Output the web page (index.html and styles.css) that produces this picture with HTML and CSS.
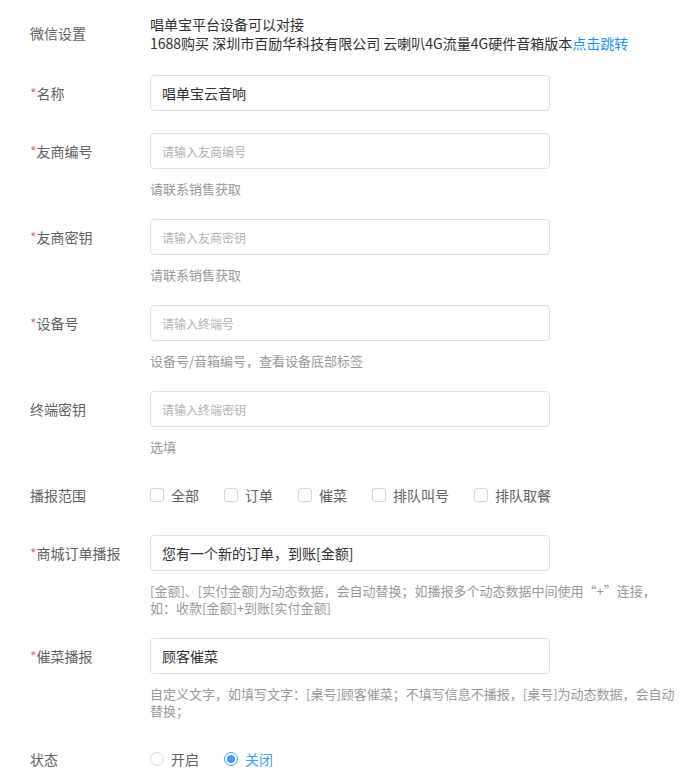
FILE: index.html
```html
<!DOCTYPE html>
<html lang="zh-CN">
<head>
<meta charset="utf-8">
<title>设备设置</title>
<link rel="stylesheet" href="styles.css">
</head>
<body>
<form class="form">
  <div class="item item-top">
    <div class="label">微信设置</div>
    <div class="content">
      <div class="info">唱单宝平台设备可以对接</div>
      <div class="info">1688购买 深圳市百励华科技有限公司 云喇叭4G流量4G硬件音箱版本<a class="link" href="#">点击跳转</a></div>
    </div>
  </div>

  <div class="item">
    <div class="label"><span class="req">*</span>名称</div>
    <div class="content">
      <input class="input" type="text" value="唱单宝云音响">
    </div>
  </div>

  <div class="item">
    <div class="label"><span class="req">*</span>友商编号</div>
    <div class="content">
      <input class="input" type="text" placeholder="请输入友商编号">
      <div class="help">请联系销售获取</div>
    </div>
  </div>

  <div class="item">
    <div class="label"><span class="req">*</span>友商密钥</div>
    <div class="content">
      <input class="input" type="text" placeholder="请输入友商密钥">
      <div class="help">请联系销售获取</div>
    </div>
  </div>

  <div class="item">
    <div class="label"><span class="req">*</span>设备号</div>
    <div class="content">
      <input class="input" type="text" placeholder="请输入终端号">
      <div class="help">设备号/音箱编号，查看设备底部标签</div>
    </div>
  </div>

  <div class="item">
    <div class="label">终端密钥</div>
    <div class="content">
      <input class="input" type="text" placeholder="请输入终端密钥">
      <div class="help">选填</div>
    </div>
  </div>

  <div class="item">
    <div class="label">播报范围</div>
    <div class="content choices">
      <label class="choice"><span class="box"></span><span class="choice-text">全部</span></label>
      <label class="choice"><span class="box"></span><span class="choice-text">订单</span></label>
      <label class="choice"><span class="box"></span><span class="choice-text">催菜</span></label>
      <label class="choice"><span class="box"></span><span class="choice-text">排队叫号</span></label>
      <label class="choice"><span class="box"></span><span class="choice-text">排队取餐</span></label>
    </div>
  </div>

  <div class="item">
    <div class="label"><span class="req">*</span>商城订单播报</div>
    <div class="content">
      <input class="input" type="text" value="您有一个新的订单，到账[金额]">
      <div class="help">[金额]、[实付金额]为动态数据，会自动替换；如播报多个动态数据中间使用“+”连接，如：收款[金额]+到账[实付金额]</div>
    </div>
  </div>

  <div class="item">
    <div class="label"><span class="req">*</span>催菜播报</div>
    <div class="content">
      <input class="input" type="text" value="顾客催菜">
      <div class="help">自定义文字，如填写文字：[桌号]顾客催菜；不填写信息不播报，[桌号]为动态数据，会自动替换；</div>
    </div>
  </div>

  <div class="item">
    <div class="label">状态</div>
    <div class="content choices">
      <label class="choice"><span class="radio"></span><span class="choice-text">开启</span></label>
      <label class="choice checked"><span class="radio"></span><span class="choice-text">关闭</span></label>
    </div>
  </div>
</form>
</body>
</html>
```

FILE: styles.css
```css
* { box-sizing: border-box; }

body {
  margin: 0;
  background: #ffffff;
  font-family: "Noto Sans CJK SC", "Microsoft YaHei", "Noto Sans", sans-serif;
  font-size: 14px;
  color: #606266;
}

.form {
  padding: 15px 0 0 30px;
}

.item {
  display: flex;
  align-items: flex-start;
  margin-bottom: 22px;
}

.label {
  width: 120px;
  flex: none;
  line-height: 36px;
  font-size: 14px;
  color: #606266;
}

.req {
  color: #f56c6c;
}

.content {
  flex: none;
  width: 528px;
}

.info {
  line-height: 19px;
  color: #303133;
  font-size: 14px;
}

.link {
  color: #1890ff;
  text-decoration: none;
}

.input {
  display: block;
  width: 400px;
  height: 36px;
  margin: 0;
  padding: 0 11px;
  border: 1px solid #dcdfe6;
  border-radius: 4px;
  background: #fff;
  font-family: inherit;
  font-size: 14px;
  color: #303133;
  outline: none;
}

.input::placeholder {
  font-size: 12px;
  color: #b0b3b9;
}

.help {
  margin-top: 11px;
  line-height: 17px;
  font-size: 13px;
  color: #999999;
}

.choices {
  display: flex;
  align-items: center;
  height: 36px;
}

.choice {
  display: flex;
  align-items: center;
  margin-right: 25px;
  color: #606266;
  font-size: 14px;
  cursor: pointer;
}

.choice-text {
  margin-left: 7px;
  line-height: 20px;
}

.box {
  width: 14px;
  height: 14px;
  border: 1px solid #d4d7de;
  border-radius: 3px;
  background: #fff;
}

.radio {
  width: 14px;
  height: 14px;
  border: 1px solid #d4d7de;
  border-radius: 50%;
  background: #fff;
  position: relative;
}

.checked .radio {
  border-color: #409eff;
}

.checked .radio::after {
  content: "";
  position: absolute;
  left: 2px;
  top: 2px;
  width: 8px;
  height: 8px;
  border-radius: 50%;
  background: #409eff;
}

.checked .choice-text {
  color: #409eff;
}
```
